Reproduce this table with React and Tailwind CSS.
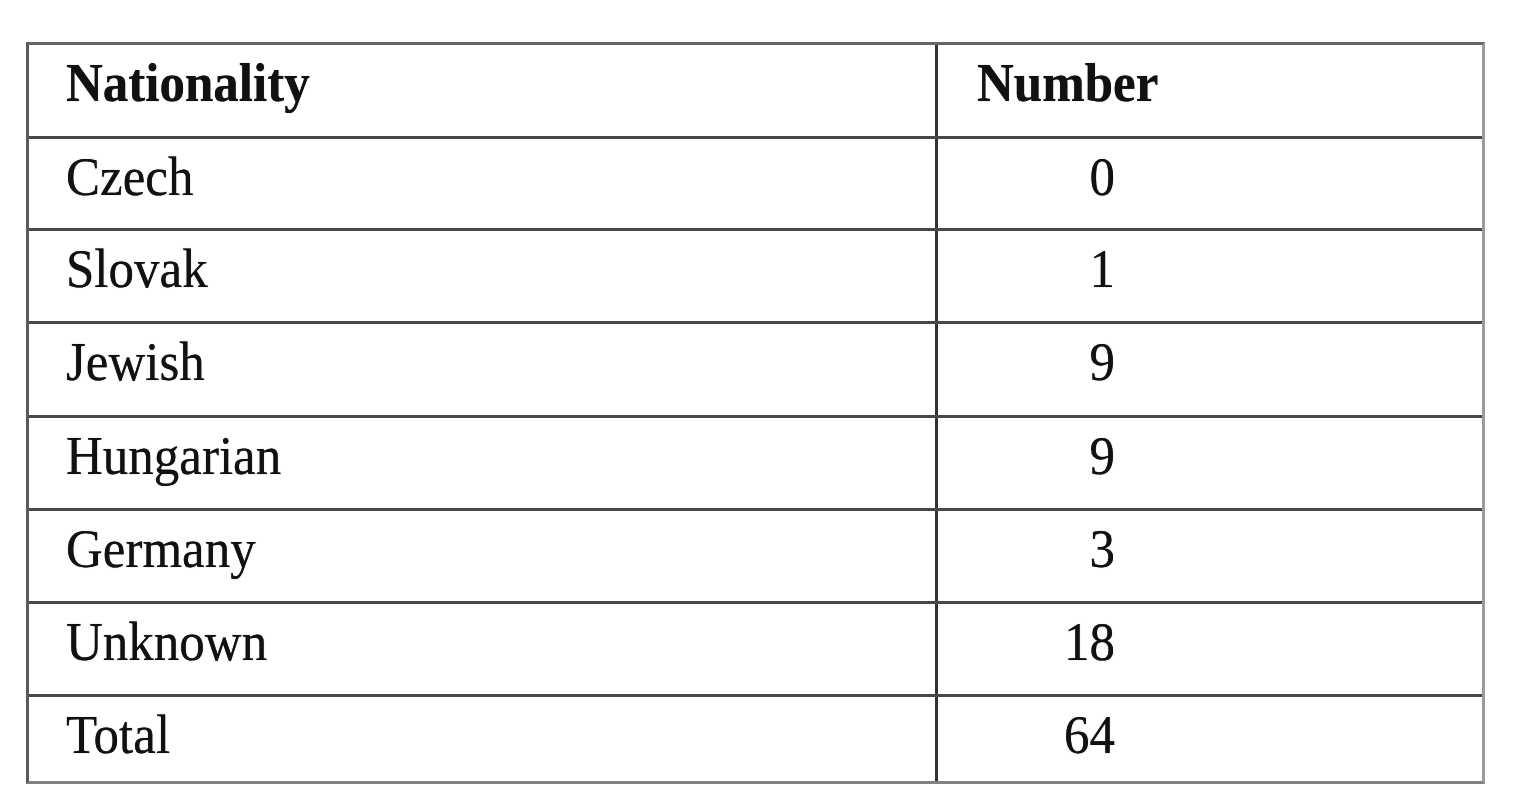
const ROWS = [
  { name: "Czech", count: "0", h: "h-[92px]" },
  { name: "Slovak", count: "1", h: "h-[93px]" },
  { name: "Jewish", count: "9", h: "h-[94px]" },
  { name: "Hungarian", count: "9", h: "h-[93px]" },
  { name: "Germany", count: "3", h: "h-[93px]" },
  { name: "Unknown", count: "18", h: "h-[93px]" },
  { name: "Total", count: "64", h: "h-[84px]" },
];

function Txt({ children, bold }) {
  return (
    <span
      className={`inline-block scale-y-[1.08] text-[51px] leading-[51px] text-[#111] [text-shadow:0_0_0.7px_#222] ${bold ? "font-bold" : ""}`}
    >
      {children}
    </span>
  );
}

export default function App() {
  return (
    <div
      className="w-[1516px] h-[800px] bg-white pt-[42px] pl-[26px]"
      style={{ fontFamily: '"Liberation Serif", "Times New Roman", serif' }}
    >
      <div className="w-[1459px] border-[3px] border-[#666] border-l-[#5a5a5a] border-r-[#9a9a9a] border-b-[#808080]">
        <div className="flex h-[94px] border-b-[3px] border-[#474747]">
          <div className="w-[909px] border-r-[3px] border-[#333] pl-[37px] pt-[13px]">
            <Txt bold>Nationality</Txt>
          </div>
          <div className="flex-1 pl-[39px] pt-[13px]">
            <Txt bold>Number</Txt>
          </div>
        </div>
        {ROWS.map((r, i) => (
          <div
            key={r.name}
            className={`flex ${r.h} ${i < ROWS.length - 1 ? "border-b-[3px] border-[#474747]" : ""}`}
          >
            <div className="w-[909px] border-r-[3px] border-[#333] pl-[37px] pt-[13px]">
              <Txt>{r.name}</Txt>
            </div>
            <div className="flex-1 pt-[13px]">
              <div className="w-[177px] text-right">
                <Txt>{r.count}</Txt>
              </div>
            </div>
          </div>
        ))}
      </div>
    </div>
  );
}
